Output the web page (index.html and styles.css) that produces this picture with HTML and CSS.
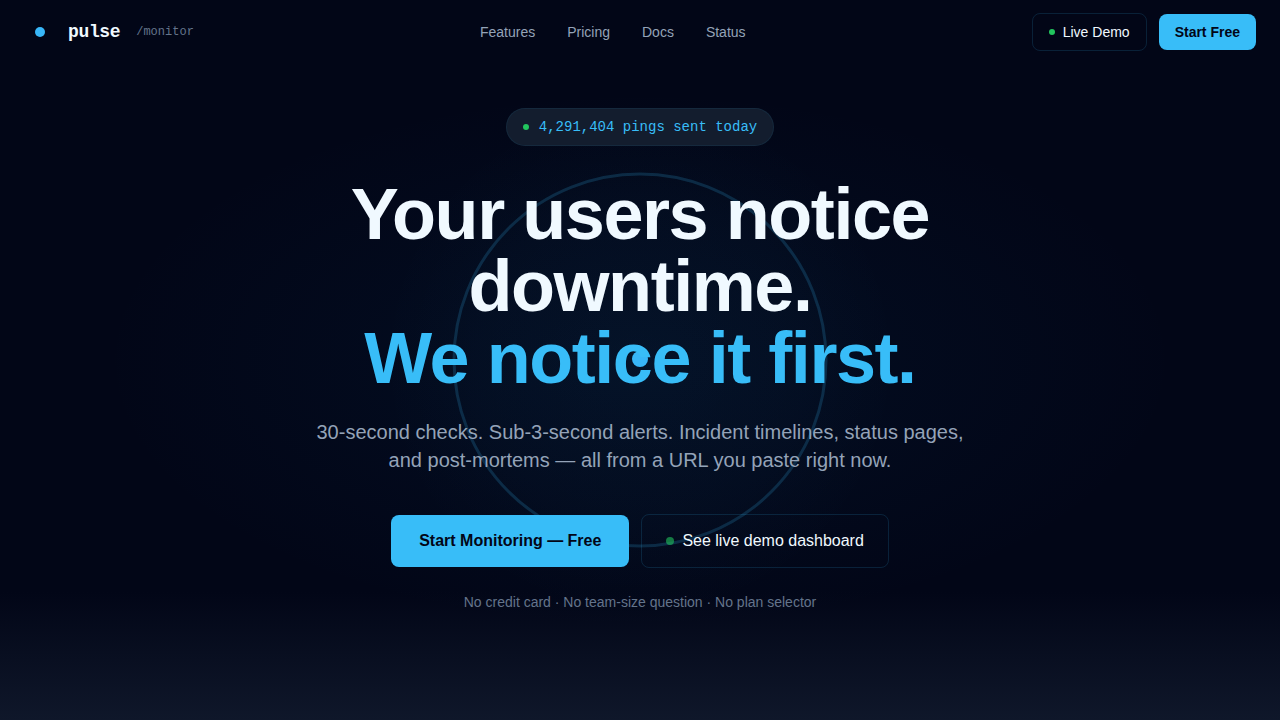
FILE: index.html
```html
<!DOCTYPE html>
<html lang="en">
<head>
<meta charset="utf-8">
<meta name="viewport" content="width=device-width, initial-scale=1">
<title>pulse /monitor</title>
<link rel="stylesheet" href="styles.css">
</head>
<body>
<header class="topbar">
  <a class="brand" href="#">
    <svg class="brand-mark" viewBox="0 0 32 32" aria-hidden="true"><circle cx="16" cy="16" r="5" fill="#38b6f8"/></svg>
    <span class="brand-name">pulse</span>
    <span class="brand-path">/monitor</span>
  </a>
  <nav class="links">
    <a href="#features">Features</a>
    <a href="#pricing">Pricing</a>
    <a href="#docs">Docs</a>
    <a href="#status">Status</a>
  </nav>
  <div class="actions">
    <button class="btn btn-outline" type="button"><span class="dot"></span>Live Demo</button>
    <button class="btn btn-primary" type="button">Start Free</button>
  </div>
</header>
<main class="hero">
  <svg class="pulse" viewBox="0 0 480 480" aria-hidden="true">
    <circle cx="240" cy="240" r="186" fill="none" stroke="#38bdf8" stroke-opacity="0.18" stroke-width="3"/>
    <circle cx="240" cy="239" r="8" fill="#38b6f8"/>
  </svg>
  <div class="content">
    <p class="badge"><span class="dot"></span>4,291,404 pings sent today</p>
    <h1 class="title">Your users notice downtime.<br><span class="accent">We notice it first.</span></h1>
    <p class="lead">30-second checks. Sub-3-second alerts. Incident timelines, status pages, and post-mortems — all from a URL you paste right now.</p>
    <div class="cta">
      <button class="btn btn-primary btn-large" type="button">Start Monitoring — Free</button>
      <button class="btn btn-outline btn-large" type="button"><span class="dot dot-large"></span>See live demo dashboard</button>
    </div>
    <p class="note">No credit card · No team-size question · No plan selector</p>
  </div>
</main>
</body>
</html>
```
FILE: styles.css
```css
* {
  box-sizing: border-box;
}

body {
  margin: 0;
  background: #020617;
  color: #f0f9ff;
  font-family: "Liberation Sans", Arial, sans-serif;
  font-size: 14px;
  line-height: 20px;
}

a {
  color: inherit;
  text-decoration: none;
}

p,
h1 {
  margin: 0;
}

.topbar {
  position: absolute;
  top: 0;
  left: 0;
  right: 0;
  z-index: 2;
  display: flex;
  align-items: center;
  justify-content: space-between;
  height: 64px;
  padding: 0 24px;
}

.brand {
  display: flex;
  align-items: center;
  font-family: "Liberation Mono", "Courier New", monospace;
}

.brand-mark {
  width: 32px;
  height: 32px;
  margin-right: 12px;
}

.brand-name {
  margin-right: 16px;
  font-size: 18px;
  font-weight: 700;
  letter-spacing: -0.02em;
}

.brand-path {
  color: #64748b;
  font-size: 12px;
}

.links {
  display: flex;
  gap: 32px;
  color: #94a3b8;
}

.actions,
.cta {
  display: flex;
  align-items: center;
  gap: 12px;
}

.btn {
  display: flex;
  align-items: center;
  gap: 8px;
  padding: 8px 16px;
  border: 0;
  border-radius: 8px;
  font: inherit;
  cursor: pointer;
}

.btn-primary {
  background: #38bdf8;
  color: #020617;
  font-weight: 700;
}

.btn-outline {
  border: 1px solid rgba(56, 189, 248, 0.15);
  background: transparent;
  color: #f0f9ff;
}

.btn-large {
  padding: 14px 24px;
  font-size: 16px;
  line-height: 24px;
}

.btn-primary.btn-large {
  padding: 14px 28px;
}

.dot {
  width: 6px;
  height: 6px;
  border-radius: 50%;
  background: #22c55e;
}

.dot-large {
  width: 8px;
  height: 8px;
  opacity: 0.6;
}

.hero {
  position: relative;
  display: flex;
  align-items: center;
  justify-content: center;
  min-height: 100vh;
  padding: 80px 24px;
  background:
    linear-gradient(to top, #0f172a, rgba(15, 23, 42, 0) 128px),
    radial-gradient(circle 260px at center, rgba(56, 189, 248, 0.03), rgba(56, 189, 248, 0.02) 60%, rgba(56, 189, 248, 0)),
    radial-gradient(ellipse 540px 270px at center, rgba(14, 116, 184, 0.07), rgba(14, 116, 184, 0));
}

.pulse {
  position: absolute;
  inset: 0;
  width: 480px;
  height: 480px;
  margin: auto;
}

.content {
  position: relative;
  display: flex;
  flex-direction: column;
  align-items: center;
  max-width: 672px;
  text-align: center;
}

.badge {
  display: flex;
  align-items: center;
  gap: 10px;
  margin-bottom: 32px;
  padding: 8px 16px;
  border: 1px solid rgba(56, 189, 248, 0.08);
  border-radius: 20px;
  background: #131d2e;
  color: #38bdf8;
  font-family: "Liberation Mono", "Courier New", monospace;
}

.title {
  margin-bottom: 24px;
  font-size: 72px;
  line-height: 72px;
  letter-spacing: -0.02em;
}

.accent {
  color: #38bdf8;
}

.lead {
  margin-bottom: 40px;
  color: #94a3b8;
  font-size: 20px;
  line-height: 28px;
}

.cta {
  margin-bottom: 24px;
}

.note {
  color: #64748b;
}
```
